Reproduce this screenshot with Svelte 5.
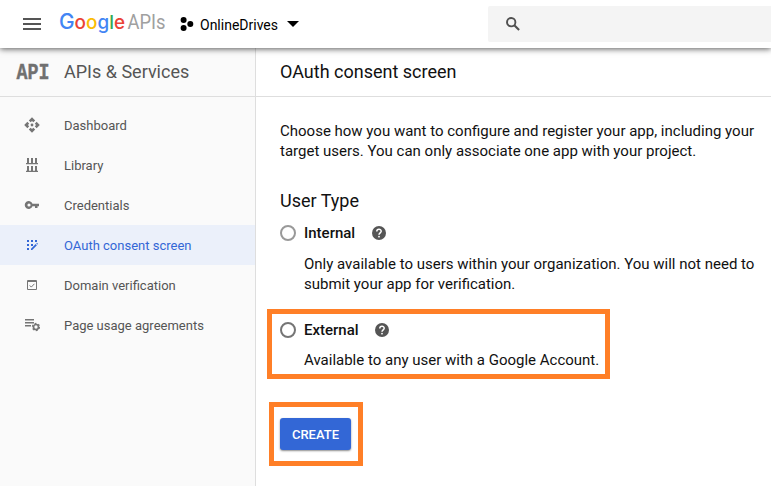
<script>
  const nav = ['Dashboard', 'Library', 'Credentials', 'OAuth consent screen', 'Domain verification', 'Page usage agreements'];
  const active = 3;
  const logo = [['G', '#4285f4'], ['o', '#ea4335'], ['o', '#fbbc05'], ['g', '#4285f4'], ['l', '#34a853'], ['e', '#ea4335']];
</script>

{#snippet help()}
  <svg class="help" width="14" height="14" viewBox="0 0 14 14">
    <circle cx="7" cy="7" r="7" fill="#555" />
    <path d="M4.8 5.4C4.8 2.5 9.2 2.5 9.2 5.3C9.2 6.8 7 7 7 8.8" fill="none" stroke="#fff" stroke-width="1.5" />
    <rect x="6.2" y="9.9" width="1.6" height="1.5" fill="#fff" />
  </svg>
{/snippet}

<div class="page">
  <header>
    <svg class="menu" width="18" height="12" viewBox="0 0 18 12" fill="#555"><path d="M0 0h18v2H0zM0 5h18v2H0zM0 10h18v2H0z" /></svg>
    <svg class="logo" width="108" height="30" viewBox="0 0 108 30">
      <text x="-1" y="20.300" class="google" textLength="66" lengthAdjust="spacingAndGlyphs">{#each logo as [ch, color], i}<tspan class:cap={i === 0} fill={color}>{ch}</tspan>{/each}</text>
      <text x="67.500" y="20" class="apis" textLength="38" lengthAdjust="spacingAndGlyphs">APIs</text>
    </svg>
    <svg class="project-icon" width="14" height="14" viewBox="0 0 14 14"><circle cx="3.6" cy="3" r="3" /><circle cx="10.3" cy="7" r="3" /><circle cx="3.6" cy="11" r="3" /></svg>
    <span class="project">OnlineDrives</span>
    <svg class="caret" width="12" height="6" viewBox="0 0 12 6"><path d="M0 0h12L6 6z" /></svg>
    <div class="search">
      <svg width="14" height="14" viewBox="0 0 14 14" fill="none" stroke="#505050"><circle cx="5.2" cy="5.2" r="4.2" stroke-width="1.9" /><path d="M8.3 8.3l4.8 4.8" stroke-width="2.1" /></svg>
    </div>
  </header>

  <div class="body">
    <aside>
      <div class="product">
        <svg width="36" height="32" viewBox="0 0 36 32"><text x="0.500" y="23" class="api" textLength="33" lengthAdjust="spacingAndGlyphs">API</text></svg>
        <span>APIs &amp; Services</span>
      </div>
      <nav>
        {#each nav as label, i}
          <div class="item" class:active={i === active}>
            <svg width="16" height="16" viewBox="0 0 16 16" fill="currentColor">
              {#if i === 0}
                <path d="M4.800 3.400L8 .2l3.200 3.200L9.300 5.200 8 3.900 6.700 5.200zM4.800 12.600L8 15.800l3.200-3.200-1.900-1.800L8 12.100l-1.300-1.300zM3.400 4.800L.2 8l3.200 3.200 1.800-1.900L3.900 8l1.300-1.300zM12.600 4.800L15.800 8l-3.200 3.200-1.800-1.900L12.100 8l-1.300-1.300z" />
                <circle cx="8" cy="8" r="1.400" />
              {:else if i === 1}
                <path d="M2 6h12v1.300H2zM2 13.700h12V15H2zM3 1h2v5H3zM7 1h2v5H7zM11 1h2v5h-2zM3 9h2v5H3zM7 9h2v5H7zM11 9h2v5h-2z" />
              {:else if i === 2}
                <path fill-rule="evenodd" d="M8.500 6.700A4 4 0 1 0 8.500 9.300H11V11h2.500V9.300H15V6.700zM5 6.400a1.600 1.600 0 1 1 0 3.200 1.600 1.600 0 0 1 0-3.200z" />
              {:else if i === 3}
                <path d="M3 3h2v2H3zM7 3h2v2H7zM11 3h2v2h-2zM3 7h2v2H3zM7 7h2v2H7zM3 11h2v2H3z" />
                <path d="M7 13v-1.300l4.700-4.700 1.200 1.200L8.200 13zM12.300 6.400l.6-.6 1.200 1.200-.6.600z" />
              {:else if i === 4}
                <path fill-rule="evenodd" d="M4 3h8a1 1 0 0 1 1 1v8a1 1 0 0 1-1 1H4a1 1 0 0 1-1-1V4a1 1 0 0 1 1-1zM4 5v7h8V5z" />
                <path d="M5.700 8.400l1.600 1.700 3.100-3.300" fill="none" stroke="currentColor" />
              {:else}
                <path d="M1 2h9v1.500H1zM1 5h9v1.500H1zM1 8h6v1.500H1z" />
                <circle cx="12" cy="10" r="2.500" fill="none" stroke="currentColor" stroke-width="1.700" />
                <circle cx="12" cy="10" r="3.600" fill="none" stroke="currentColor" stroke-width="1.100" stroke-dasharray="1.900 1.870" />
              {/if}
            </svg>
            <span>{label}</span>
          </div>
        {/each}
      </nav>
    </aside>

    <main>
      <h1>OAuth consent screen</h1>
      <div class="content">
        <p class="intro">Choose how you want to configure and register your app, including your<br />target users. You can only associate one app with your project.</p>
        <h2>User Type</h2>
        <div class="option internal">
          <div class="choice"><i class="radio"></i><b>Internal</b>{@render help()}</div>
          <p>Only available to users within your organization. You will not need to<br />submit your app for verification.</p>
        </div>
        <div class="option external">
          <div class="choice"><i class="radio"></i><b>External</b>{@render help()}</div>
          <p>Available to any user with a Google Account.</p>
        </div>
        <div class="action"><button>CREATE</button></div>
      </div>
    </main>
  </div>
</div>

<style>
  :global(body) { margin: 0; }
  * { box-sizing: border-box; }
  .page { width: 771px; height: 486px; overflow: hidden; font-family: Roboto, sans-serif; color: #111; background: #fff; display: flex; flex-direction: column; }
  svg { display: block; flex: none; }
  header { height: 48px; flex: none; display: flex; align-items: center; padding-left: 23px; background: #fff; box-shadow: 0 1px 6px rgba(0, 0, 0, .65); position: relative; z-index: 1; }
  .logo { margin-left: 19px; overflow: visible; }
  .google { font: 500 19px Inter, sans-serif; }
  .cap { font-size: 21px; }
  .apis { font: 400 19.500px Roboto, sans-serif; fill: #a0a0a0; }
  .project-icon { margin-left: 12px; }
  .project { margin-left: 6px; width: 78px; font-size: 14px; line-height: 20px; padding-top: 2px; white-space: nowrap; color: #000; }
  .caret { margin-left: 9px; }
  .search { margin-left: auto; width: 283px; height: 36px; background: #f4f4f4; border-radius: 2px 0 0 2px; padding: 11px 18px; }
  .body { display: flex; flex: 1; }
  aside { width: 256px; flex: none; background: #fafafa; border-right: 1px solid #dedede; }
  .product { height: 49px; border-bottom: 1px solid #dedede; display: flex; align-items: center; padding-left: 16px; font-size: 18px; color: #555; }
  .product svg { overflow: visible; }
  .product span { margin-left: 12px; padding-bottom: 2px; }
  .api { font: bold 22px "Liberation Mono", monospace; fill: #707070; stroke: #707070; stroke-width: .4; }
  nav { padding-top: 8px; }
  .item { height: 40px; display: flex; align-items: center; gap: 24px; padding-left: 24px; font-size: 13px; color: #757575; }
  .item span { color: #555; padding-top: 1px; }
  .active { background: #ebf0fa; }
  .active, .active span { color: #3367d6; }
  main { flex: 1; }
  h1 { margin: 0; height: 49px; border-bottom: 1px solid #dedede; padding-left: 24px; font-size: 18px; font-weight: 400; line-height: 48px; }
  .content { padding: 24px 0 0 24px; font-size: 15px; line-height: 20px; }
  p { margin: 0; white-space: nowrap; }
  h2 { margin: 28px 0 10px; font-size: 18px; font-weight: 400; line-height: 24px; }
  .choice { display: flex; align-items: center; height: 20px; margin-bottom: 11px; }
  .radio { width: 16px; height: 16px; border: 2px solid #999; border-radius: 50%; margin-right: 8px; }
  b { font-weight: 500; }
  .help { margin-left: 17px; }
  .option p { padding-left: 24px; }
  .external { width: 343px; height: 70px; border: 5px solid #ff7f27; margin: 15px 0 0 -13px; padding: 6px 0 0 8px; }
  .external .choice { margin-bottom: 10px; }
  .external .radio { border-color: #757575; }
  .external .help { margin-left: 16px; }
  .action { width: 94px; height: 64px; border: 5px solid #ff7f27; margin: 23px 0 0 -11px; padding: 11px 0 0 6px; }
  button { display: block; width: 71px; height: 32px; border: 0; border-radius: 3px; padding: 0; background: #3367d6; color: #fff; font: 500 13px Roboto, sans-serif; box-shadow: 0 1px 2px rgba(0, 0, 0, .45); }
</style>
